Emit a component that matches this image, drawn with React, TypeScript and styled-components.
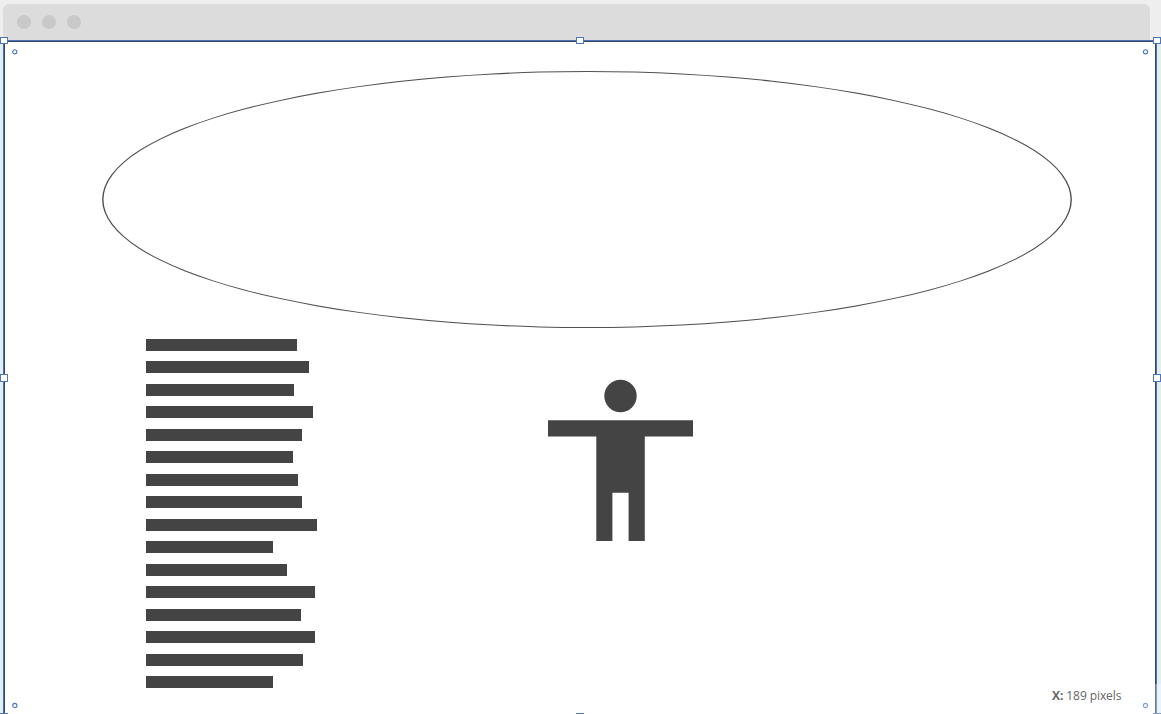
import React from "react";
import styled, { createGlobalStyle } from "styled-components";

const GlobalStyle = createGlobalStyle`
  body { margin: 0; overflow: hidden; }
  * { box-sizing: border-box; }
`;

const Workspace = styled.div`
  position: relative;
  display: flex;
  flex-direction: column;
  width: 1161px;
  height: 714px;
  padding: 4px 4px 0 3px;
  overflow: hidden;
  background: #eeeeee;
  font-family: "Open Sans", "Noto Sans", sans-serif;
`;

const TitleBar = styled.header`
  display: flex;
  align-items: center;
  gap: 10.7px;
  flex: none;
  width: 1147px;
  height: 36px;
  padding-left: 14.4px;
  border-radius: 6px 6px 0 0;
  background: #dcdcdc;
`;

const WindowDot = styled.span`
  width: 14px;
  height: 14px;
  border-radius: 50%;
  background: #c9c9c9;
`;

const Artboard = styled.main`
  display: flex;
  flex-direction: column;
  flex: none;
  width: 1154px;
  height: 678px;
  border: 1px solid #4a75b2;
  box-shadow: inset 0 0 0 1px #34435f, -3px 0 0 #e1eef8, 4px 0 0 #e7ecef;
  background: #ffffff;
`;

const Ellipse = styled.svg`
  display: block;
  flex: none;
  width: 972px;
  height: 259px;
  margin: 29px 0 0 97px;
`;

const Content = styled.div`
  display: flex;
  align-items: flex-start;
  padding: 10px 0 0 142px;
`;

const BarList = styled.div`
  display: flex;
  flex-direction: column;
  width: 402px;
`;

const Bar = styled.div<{ $width: number }>`
  width: ${(p) => p.$width}px;
  height: 12px;
  margin-bottom: 10px;
  background: #444444;
  &:nth-child(even) { margin-bottom: 11px; }
`;

const Person = styled.svg`
  display: block;
  width: 145px;
  height: 162px;
  margin-top: 40px;
`;

const Handle = styled.span<{ $x: number; $y: number; $height: number }>`
  position: absolute;
  left: ${(p) => p.$x}px;
  top: ${(p) => p.$y}px;
  width: 8px;
  height: ${(p) => p.$height}px;
  border: 1px solid #4a76bd;
  background: #ffffff;
`;

const CornerPoint = styled.svg<{ $x: number; $y: number }>`
  position: absolute;
  left: ${(p) => p.$x}px;
  top: ${(p) => p.$y}px;
  width: 7px;
  height: 7px;
`;

const Readout = styled.div`
  position: absolute;
  right: 0;
  bottom: 0;
  width: 121px;
  height: 30px;
  padding-left: 12px;
  background: rgba(255, 255, 255, 0.3);
  color: #666666;
  font-size: 12px;
  letter-spacing: -0.08px;
  line-height: 24px;
  white-space: nowrap;
`;

const barWidths = [151, 163, 148, 167, 156, 147, 152, 156, 171, 127, 141, 169, 155, 169, 157, 127];
const handles = [
  [0, 37, 7], [576, 37, 7], [1153, 37, 7],
  [0, 374, 8], [1153, 374, 8],
  [0, 713, 7], [576, 713, 7], [1153, 713, 7],
];
const cornerPoints = [
  { x: 11, y: 48, cx: 3.8, cy: 3.8 },
  { x: 1142, y: 48, cx: 3.5, cy: 3.8 },
  { x: 11, y: 702, cx: 3.8, cy: 3.5 },
  { x: 1142, y: 702, cx: 3.5, cy: 3.5 },
];

export default function App() {
  return (
    <>
      <GlobalStyle />
      <Workspace>
        <TitleBar>
          <WindowDot />
          <WindowDot />
          <WindowDot />
        </TitleBar>
        <Artboard>
          <Ellipse viewBox="0 0 972 259">
            <path
              fill="#505050"
              fillRule="evenodd"
              d="M1.1 129.5A484.9 128.55 0 0 1 970.9 129.5A484.9 128.55 0 0 1 1.1 129.5ZM2.5 129.5A483.5 127.5 0 0 0 969.5 129.5A483.5 127.5 0 0 0 2.5 129.5Z"
            />
          </Ellipse>
          <Content>
            <BarList>
              {barWidths.map((width, i) => <Bar key={i} $width={width} />)}
            </BarList>
            <Person viewBox="0 0 145 162" fill="#444444">
              <circle cx="72.5" cy="17" r="16.2" />
              <path d="M0 41.2H145V57.4H96.8V162H80.6V113.7H64.4V162H48.3V57.4H0Z" />
            </Person>
          </Content>
        </Artboard>
        {cornerPoints.map(({ x, y, cx, cy }) => (
          <CornerPoint key={`${x}-${y}`} $x={x} $y={y} viewBox="0 0 7 7">
            <circle cx={cx} cy={cy} r="2.1" fill="none" stroke="#4778c4" strokeWidth="1.1" />
          </CornerPoint>
        ))}
        {handles.map(([x, y, height]) => <Handle key={`${x}-${y}`} $x={x} $y={y} $height={height} />)}
        <Readout><b>X:</b> 189 pixels</Readout>
      </Workspace>
    </>
  );
}
